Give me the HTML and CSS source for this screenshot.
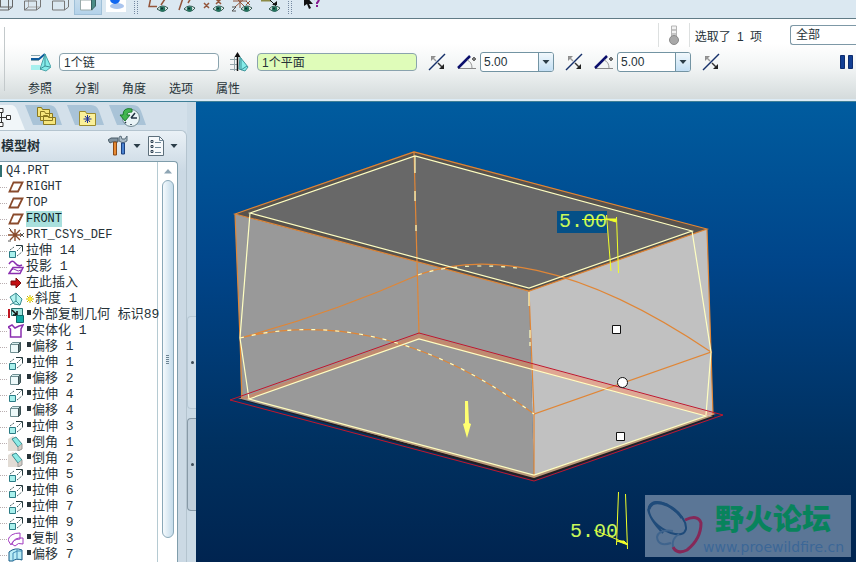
FILE: index.html
```
<!DOCTYPE html>
<html lang="zh-CN">
<head>
    <meta charset="UTF-8">
    <meta name="viewport" content="width=device-width, initial-scale=1.0">
    <title>Q4.PRT</title>
    <link rel="stylesheet" href="styles.css">
</head>
<body>
    <!-- shared icons -->
    <svg class="defs" width="0" height="0" aria-hidden="true">
        <symbol id="eye" viewBox="0 0 12 8"><path d="M0 4Q5 -1.500 11 3Q7 9 0 4Z" fill="#f4f8f8" stroke="#31564f"/><circle cx="5.500" cy="4" r="2.800" fill="#24735f"/><circle cx="5" cy="3.500" r="1" fill="#0c2c2a"/></symbol>
        <symbol id="flip" viewBox="0 0 20 20"><path d="M2 18L18 2" stroke="#16306a" stroke-width="1.500"/><path d="M4 4h5L4 9z" fill="#8d8d8d"/><path d="M5 5l4 4" stroke="#999" stroke-width="1.500"/><path d="M17 17h-5l5-5z" fill="#222"/><path d="M11 11l4 4" stroke="#333" stroke-width="1.500"/></symbol>
        <symbol id="angle" viewBox="0 0 20 20"><path d="M1 16.500H19" stroke="#888"/><path d="M1 16L13 4" stroke="#0b0f6c" stroke-width="2.500"/><path d="M10 8Q15 10 15 16" fill="none" stroke="#999"/><circle cx="17" cy="7" r="1.300" fill="#fff" stroke="#111"/></symbol>
        <symbol id="plane" viewBox="0 0 16 16"><path d="M5.500 3.500H14.500L10 12.500H1.500Z" fill="#fff" stroke="#8a4b2c" stroke-width="1.800"/></symbol>
        <symbol id="extrude" viewBox="0 0 16 16"><path d="M1.500 8.500h6v6h-6z" fill="#a8f0ec" stroke="#2a7a84"/><path d="M8 2.500h6.500v6" fill="none" stroke="#24383c"/><path d="M2 7l4-3M9 8l5-5M9 13l5-4" stroke="#4f666b" stroke-dasharray="2 1"/></symbol>
        <symbol id="offset" viewBox="0 0 16 16"><path d="M2.500 5.500h8v8h-8z" fill="#eefafa" stroke="#6f8f92"/><path d="M2.500 5.500l2-2h8l-2 2z" fill="#d7eeee" stroke="#6f8f92"/><path d="M10.500 5.500l2-2v8l-2 2z" fill="#5c7577" stroke="#3c5053"/></symbol>
        <symbol id="chamfer" viewBox="0 0 16 16"><path d="M0 4l5-3 9 8v5l-4 2H0z" fill="#e2dcd5"/><path d="M4 4l4-2 6 7-4 3z" fill="#8cebe6" stroke="#3a8b90"/><path d="M10 12v4l4-2V9" fill="#d4cdc4" stroke="#999"/></symbol>
        <symbol id="caret" viewBox="0 0 8 6"><path d="M0.500 1h7L4 5z" fill="#2b3d48"/></symbol>
    </svg>

    <div class="app">
        <header class="toolbar">
            <button class="tool" aria-label="线框"><svg viewBox="0 0 28 18"><path d="M6.500 -5v15h12v-15M6 -1h12M10.500 -6v13h12v-13M6.500 10l4-3M18.500 10l4-3" fill="none" stroke="#666"/></svg></button>
            <button class="tool" aria-label="隐藏线"><svg viewBox="0 0 28 18"><path d="M10.500 -6v13h12" fill="none" stroke="#aaa"/><path d="M6.500 10v-9h12v9zM18.500 10l4-3v-9M6.500 10l4-3" fill="none" stroke="#777"/></svg></button>
            <button class="tool" aria-label="无隐藏线"><svg viewBox="0 0 28 18"><path d="M6.500 10v-9h12v9zM18.500 10l4-3v-9" fill="none" stroke="#777"/></svg></button>
            <button class="tool active" aria-label="着色"><svg viewBox="0 0 28 18"><path d="M6.500 10v-10h12v10z" fill="#fff" stroke="#9aa"/><path d="M17.500 10v-10l4-3v9z" fill="#4b8c86" stroke="#375f60"/></svg></button>
            <button class="tool" aria-label="增强的真实感"><svg viewBox="0 0 28 18"><rect x="4" width="20" height="12" fill="#fff"/><ellipse cx="15" cy="6" rx="7" ry="3" fill="#a9c4ee"/><circle cx="13" cy="-1" r="5" fill="#1267f0"/></svg></button>
            <span class="grip"></span>
            <button class="tool" aria-label="基准平面"><svg viewBox="0 0 28 18"><path d="M7 -3L5 6.500h8M17 -1h4l-4 6" fill="none" stroke="#93553a" stroke-width="1.500"/><use href="#eye" x="13" y="5" width="12" height="8"/></svg></button>
            <button class="tool" aria-label="基准轴"><svg viewBox="0 0 28 18"><path d="M11 -2L7 10M19 -2l-3 5" fill="none" stroke="#93553a" stroke-width="1.500"/><use href="#eye" x="12" y="5" width="12" height="8"/></svg></button>
            <button class="tool" aria-label="基准点"><svg viewBox="0 0 28 18"><path d="M4 3l5 5M9 3l-5 5M16 -1l5 5M21 -1l-5 5" fill="none" stroke="#93553a" stroke-width="1.500"/><use href="#eye" x="13" y="5" width="12" height="8"/></svg></button>
            <button class="tool" aria-label="坐标系"><svg viewBox="0 0 28 18"><path d="M5 1h14M12 -3v11M7 7l10-9M7 -3l10 10M18 1l4 4M22 1l-4 4" fill="none" stroke="#93553a"/><path d="M4 7h4l-4 4h4" fill="none" stroke="#555"/><use href="#eye" x="13" y="5" width="12" height="8"/></svg></button>
            <button class="tool" aria-label="注释"><svg viewBox="0 0 28 18"><path d="M5 0.500h10" stroke="#8b8a45" stroke-width="2"/><path d="M14 0l6 6" stroke="#111"/><path d="M16 5h5V1z" fill="#111"/><use href="#eye" x="13" y="5" width="12" height="8"/></svg></button>
            <span class="grip"></span>
            <button class="tool" aria-label="帮助"><svg viewBox="0 0 28 18"><path d="M6 -6v12l3-2 2 5 2-1-2-4h4z" fill="#111"/><path d="M16 0q1-3 4-2q2 2-1 5v1M19 5v2" fill="none" stroke="#86188f" stroke-width="2"/></svg></button>
        </header>

        <section class="dashboard">
            <div class="status">
                <span class="thermo"><svg width="14" height="22" viewBox="0 0 14 22"><path d="M4.500 2h5v4h-5zM4.500 6h5v4h-5z" fill="#f2f2f2" stroke="#b5b5b5"/><path d="M4.500 10h5v4h-5z" fill="#ddd" stroke="#b5b5b5"/><circle cx="7" cy="16" r="4.500" fill="#a8a8a8" stroke="#8b8b8b"/></svg></span>
                <span class="selected-count">选取了 <span class="count">1</span> 项</span>
                <select class="filter" aria-label="过滤器"><option>全部</option></select>
            </div>
            <div class="controls">
                <label class="field">
                    <svg width="20" height="20" viewBox="0 0 20 20"><path d="M0 3.500h9M0 17.500h10M0 8.500h8" stroke="#88a4ad"/><path d="M0 7h8l6-5" fill="none" stroke="#0b5a9c" stroke-width="2"/><path d="M14 2l6 13-5 4-6-2z" fill="#84ece9" stroke="#4ba5aa"/><path d="M14 2v12l-5 3M14 14l5 1" fill="none" stroke="#3b8f96"/><path d="M0 13h9v5H0z" fill="#a7f0ee"/></svg>
                    <input type="text" value="1个链" aria-label="拔模枢轴">
                </label>
                <label class="field">
                    <svg width="20" height="20" viewBox="0 0 20 20"><path d="M1 7.500h7M1 12.500h7M1 17.500h8M5.500 5v14" stroke="#94a6ab"/><path d="M11 5l8 10-3 4-6-2z" fill="#84ece9" stroke="#3f969b"/><path d="M12 6v12l6-4" fill="none" stroke="#3b8f96"/><path d="M8.500 19V2" stroke="#111" stroke-width="1.500"/><path d="M5.500 5l3-5 3 5z" fill="#111"/></svg>
                    <input class="picked" type="text" value="1个平面" aria-label="拖拉方向">
                </label>
                <button class="flip" aria-label="反转拖拉方向"><svg width="20" height="20"><use href="#flip"/></svg></button>
                <label class="angle">
                    <svg width="20" height="20"><use href="#angle"/></svg>
                    <span class="combo"><select aria-label="角度1"><option>5.00</option></select><span class="arrow"><svg width="8" height="6"><use href="#caret"/></svg></span></span>
                </label>
                <button class="flip" aria-label="反转角度1"><svg width="20" height="20"><use href="#flip"/></svg></button>
                <label class="angle">
                    <svg width="20" height="20"><use href="#angle"/></svg>
                    <span class="combo"><select aria-label="角度2"><option>5.00</option></select><span class="arrow"><svg width="8" height="6"><use href="#caret"/></svg></span></span>
                </label>
                <button class="flip" aria-label="反转角度2"><svg width="20" height="20"><use href="#flip"/></svg></button>
                <button class="pause" aria-label="暂停"><svg width="14" height="14" viewBox="0 0 14 14"><path d="M0.500 0.500h4v13h-4zM8.500 0.500h4v13h-4z" fill="#123f94" stroke="#0d2d70"/></svg></button>
            </div>
            <nav class="panels">
                <button>参照</button>
                <button>分割</button>
                <button>角度</button>
                <button>选项</button>
                <button>属性</button>
            </nav>
        </section>

        <main class="work">
            <aside class="sidebar">
                <div class="navigator">
                    <div class="tabs">
                        <button class="tab first" aria-label="模型树"><svg width="25" height="28" viewBox="0 0 25 28"><path d="M0 3h11q4 0 6 5l8 20H0z" fill="#f1f6f9"/><path d="M0 15.500h6M1.500 9v14" stroke="#333"/><path d="M-1 6.500h4v4h-4zM6.500 13.500h4v4h-4zM-1 20.500h4v4h-4z" fill="#fff" stroke="#333"/></svg></button>
                        <button class="tab" aria-label="层"><svg width="42" height="28" viewBox="0 0 42 28"><path d="M0 3h24q6 0 8 6l5 14H8z" fill="#a9c3d7"/><path d="M12.500 5.500h4l1 2h7v7h-12zM15.500 9.500h4l1 2h7v7h-12zM18.500 13.500h4l1 2h7v7h-12z" fill="#f6e57b" stroke="#897820"/></svg></button>
                        <button class="tab" aria-label="文件夹浏览器"><svg width="42" height="28" viewBox="0 0 42 28"><path d="M0 3h24q6 0 8 6l5 14H8z" fill="#a9c3d7"/><path d="M12.500 9.500h6l1 2h9v12h-16z" fill="#faf09a" stroke="#9c8b2d"/><path d="M20.500 13v8M16.500 17h8M18 14l5 6M23 14l-5 6" stroke="#1c2f9c"/></svg></button>
                        <button class="tab" aria-label="收藏夹"><svg width="42" height="28" viewBox="0 0 42 28"><path d="M0 3h24q6 0 8 6l5 14H8z" fill="#a9c3d7"/><circle cx="22" cy="16" r="8.500" fill="#e9f3f6" stroke="#718a94"/><path d="M22 16l4-5M22 16h6M22 22v1M17 20l-1 1" stroke="#234" stroke-width="1.500"/><path d="M23 7Q14 5 14 13h-3l5 6 5-6h-3q0-3 5-3z" fill="#43b650" stroke="#1c7a2e"/></svg></button>
                    </div>
                    <div class="panel">
                        <div class="panel-head">
                            <h1>模型树</h1>
                            <button class="menu" aria-label="设置"><svg width="20" height="22" viewBox="0 0 20 22"><path d="M0 5l3-2h7v4H4l-2 1z" fill="#8193a0" stroke="#4b5d69"/><path d="M5.500 7h3v13h-3z" fill="#e78a34" stroke="#8b4a16"/><path d="M11 2v4l4 2 4-2V1l-2 3h-3l-1-3z" fill="#a8b9c5" stroke="#5b6e7b"/><path d="M13.500 8h3v11h-3z" fill="#4b83d1" stroke="#1d417f"/></svg><svg width="8" height="6"><use href="#caret"/></svg></button>
                            <button class="menu" aria-label="显示"><svg width="18" height="22" viewBox="0 0 18 22"><path d="M1.500 1.500h11l4 4v15h-15z" fill="#f7fafc" stroke="#5d6f7b"/><path d="M12.500 1.500v4h4M8 7.500h6M8 12.500h6M8 17.500h6" fill="none" stroke="#6e8798"/><path d="M4 5.500h2v2H4zM4 10.500h2v2H4zM4 15.500h2v2H4z" fill="none" stroke="#345"/></svg><svg width="8" height="6"><use href="#caret"/></svg></button>
                        </div>
                        <div class="tree-box">
                            <ul class="tree">
                                <li class="root latin">Q4.PRT</li>
                                <li class="latin"><svg><use href="#plane"/></svg><span>RIGHT</span></li>
                                <li class="latin"><svg><use href="#plane"/></svg><span>TOP</span></li>
                                <li class="latin"><svg><use href="#plane"/></svg><span class="picked">FRONT</span></li>
                                <li class="latin"><svg viewBox="0 0 16 16"><path d="M0 8h13M7 2v12M2 3l10 10M12 3L2 13" stroke="#8a4b2c" stroke-width="1.400" fill="none"/><path d="M12 6l4 4M16 6l-4 4M1 1l2 2M0 14h3" stroke="#555"/></svg><span>PRT_CSYS_DEF</span></li>
                                <li><svg><use href="#extrude"/></svg><span>拉伸 14</span></li>
                                <li><svg viewBox="0 0 16 16"><path d="M1 5q3-5 6-1t7 2M1 14.500l4-6h10l-3 6z" fill="none" stroke="#8a2fb0" stroke-width="1.500"/><path d="M3 11q3-2 5 0t5 0" fill="none" stroke="#8a2fb0"/></svg><span>投影 1</span></li>
                                <li><svg viewBox="0 0 16 16"><path d="M3 6h5V3l5 5-5 5v-3H3z" fill="#c40f13" stroke="#7d0a0c"/></svg><span>在此插入</span></li>
                                <li><svg viewBox="0 0 16 16"><path d="M2 6l6-4 6 6-2 6-6-1z" fill="#b6f5f2" stroke="#3c8c92"/><path d="M8 2v8l-6 4M8 10l4 4" fill="none" stroke="#3c8c92"/></svg><svg class="new" viewBox="0 0 8 8"><path d="M4 0v8M0 4h8M1 1l6 6M7 1L1 7" stroke="#c9b400"/><circle cx="4" cy="4" r="2" fill="#ffee30"/></svg><span>斜度 1</span></li>
                                <li class="mark"><svg viewBox="0 0 16 16"><path d="M0 2h2v9H0z" fill="#c01722"/><path d="M3.500 1.500h11v7h-11z" fill="#a3e6e2" stroke="#24716f"/><path d="M4 3l5 5M9 4v4H5" stroke="#111" fill="none" stroke-width="1.500"/><path d="M8.500 8.500h7v7h-7z" fill="#12aaa6" stroke="#0d6a69"/></svg><span>外部复制几何 标识89</span></li>
                                <li class="mark"><svg viewBox="0 0 16 16"><path d="M2.500 14V6L0 4l4-2 3 3 4-2 4-1-2 4v8z" fill="#fff" stroke="#8a2fb0" stroke-width="1.500"/></svg><span>实体化 1</span></li>
                                <li class="mark"><svg><use href="#offset"/></svg><span>偏移 1</span></li>
                                <li class="mark"><svg><use href="#extrude"/></svg><span>拉伸 1</span></li>
                                <li class="mark"><svg><use href="#offset"/></svg><span>偏移 2</span></li>
                                <li class="mark"><svg><use href="#extrude"/></svg><span>拉伸 4</span></li>
                                <li class="mark"><svg><use href="#offset"/></svg><span>偏移 4</span></li>
                                <li class="mark"><svg><use href="#extrude"/></svg><span>拉伸 3</span></li>
                                <li class="mark"><svg><use href="#chamfer"/></svg><span>倒角 1</span></li>
                                <li class="mark"><svg><use href="#chamfer"/></svg><span>倒角 2</span></li>
                                <li class="mark"><svg><use href="#extrude"/></svg><span>拉伸 5</span></li>
                                <li class="mark"><svg><use href="#extrude"/></svg><span>拉伸 6</span></li>
                                <li class="mark"><svg><use href="#extrude"/></svg><span>拉伸 7</span></li>
                                <li class="mark"><svg><use href="#extrude"/></svg><span>拉伸 9</span></li>
                                <li class="mark"><svg viewBox="0 0 16 16"><path d="M0 9q2-7 12-7v6Q5 8 3 14zM4 13q2-7 11-6v6q-5-2-8 2z" fill="#fff" stroke="#a23cc0"/></svg><span>复制 3</span></li>
                                <li class="mark"><svg viewBox="0 0 16 16"><path d="M1 5q6-5 13-2v10q-6-2-9 1H1z" fill="#b9ecf6" stroke="#155a86"/><path d="M5 14V6M9 3v9M5 6q4-3 9-2" fill="none" stroke="#3f8bb5"/></svg><span>偏移 7</span></li>
                            </ul>
                            <div class="scrollbar">
                                <svg width="10" height="6" viewBox="0 0 10 6"><path d="M1 5.500h8L5 1z" fill="#8ea5b4"/></svg>
                                <div class="thumb"><i></i></div>
                            </div>
                        </div>
                    </div>
                </div>
                <div class="sashes">
                    <button class="sash" aria-label="折叠导航器"></button>
                    <button class="sash raised" aria-label="折叠浏览器"></button>
                </div>
            </aside>

            <section class="viewport">
                <svg class="model" viewBox="196 102 660 460" preserveAspectRatio="xMidYMid meet">
                    <!-- solid -->
                    <path d="M241 400L534 480L714 417V414L534 474L241 396Z" fill="#241d20"/>
                    <path d="M235 214L529 291L534 477L241 399L240 338Z" fill="#999"/>
                    <path d="M529 291L707 229L711 352L713 415L534 477Z" fill="#c1c1c1"/>
                    <path d="M235 214L414 151L707 229L529 291Z" fill="#57524d"/>
                    <path d="M250 213L415 156L692 231L529 288Z" fill="#686868"/>
                    <!-- draft plane -->
                    <path d="M238 399L419 334L532 364V370L419 339L249 399Z" fill="#c08a70"/>
                    <path d="M532 364L716 414L706 416L532 370Z" fill="#dfa793"/>
                    <path d="M242 398L249 399L534 475L706 416H713L534 478Z" fill="#b89a7c"/>
                    <!-- model edges -->
                    <g fill="none" stroke="#e08636" stroke-width="1.200">
                        <path d="M235 214L414 152L707 229L529 291ZM529 291L534 414V477M707 229L711 352L713 415M235 214L240 338L242 398M414 152L419 334"/>
                        <path d="M240 338Q330 314 418 275C480 252 575 260 711 352L534 414C420 330 320 318 240 338"/>
                    </g>
                    <g fill="none" stroke="#ffffc2" stroke-width="1.200">
                        <path d="M250 213L415 156L692 231L529 288ZM250 213L240 338L249 399M692 231L711 352L706 415M249 399L419 339L706 416L534 475Z"/>
                        <path d="M415 156v17M415 191v10M416 225v6M529 292v14M530 330v8M530 342v4"/>
                        <path d="M240 338C320 318 420 330 534 414M418 275C450 264 490 265 517 268" stroke-dasharray="4 8"/>
                    </g>
                    <path d="M230 400L419 333L723 415L534 481Z" fill="none" stroke="#c3162b"/>
                    <path d="M465 401h3l1 22 2 1-4 14-4-14 2-1z" fill="#ffff70"/>
                    <!-- handles -->
                    <g fill="#fff" stroke="#111">
                        <path d="M612.500 325.500h8v8h-8zM616.500 432.500h8v8h-8z"/>
                        <circle cx="622.500" cy="382.500" r="5"/>
                    </g>
                    <!-- angle dimensions -->
                    <path d="M557 211h50v22h-50z" fill="#045087"/>
                    <text class="dimension" x="559" y="227">5.00</text>
                    <text class="dimension" x="570" y="537">5.00</text>
                    <g fill="none" stroke="#f1ff28">
                        <path d="M582 219.500h34M606.500 215L611 271M616.500 217L618.500 273M618.500 492L616.500 545M625.500 494L627.500 549M594 530L628 544"/>
                        <path d="M606 219l10 3v-3zM617 541l11 4-4-4z" fill="#f1ff28"/>
                    </g>
                </svg>
                <div class="watermark">
                    <svg width="58" height="58" viewBox="0 0 58 58"><g fill="none"><path d="M18 36Q2 20 4 10Q8 1 22 8Q42 20 41 32Q39 40 26 36Q6 28 3 12" stroke="#1f4b7a" stroke-width="2"/><path d="M4 12Q7 2 22 8Q32 13 37 21" stroke="#1f4b7a" stroke-width="3"/><path d="M40 23Q53 17 56 26Q56 42 42 53Q32 58 28 50" stroke="#852858" stroke-width="3"/><path d="M28 34Q14 32 12 40Q13 50 26 46M28 50Q26 42 34 37" stroke="#3f648d" stroke-width="2"/></g></svg>
                    <div class="mark-text">
                        <strong>野火论坛</strong>
                        <span>www.proewildfire.cn</span>
                    </div>
                </div>
            </section>
        </main>
    </div>
</body>
</html>
```
FILE: styles.css
```
* {
    margin: 0;
    padding: 0;
    box-sizing: border-box;
}

body {
    font-family: "Liberation Sans", "Noto Sans CJK SC", sans-serif;
    font-size: 12px;
    color: #263238;
    background: #dbe8f1;
}

button {
    font: inherit;
    color: inherit;
    background: none;
    border: none;
    cursor: pointer;
}

input,
select {
    font: inherit;
    color: inherit;
}

svg {
    display: block;
    flex-shrink: 0;
}

.defs {
    position: absolute;
}

.app {
    display: flex;
    flex-direction: column;
    height: 100vh;
    overflow: hidden;
}

/* top toolbar */
.toolbar {
    display: flex;
    flex-shrink: 0;
    height: 19px;
    padding-right: 10px;
    border-bottom: 1px solid #617b86;
    background: #dbe8f1;
    overflow: hidden;
}

.tool {
    width: 28px;
    height: 18px;
    flex-shrink: 0;
}

.tool:first-child {
    margin-left: -10px;
}

.tool.active {
    height: 15px;
    background: linear-gradient(#c6dcec, #b3d2ea);
    border: 1px solid #9fc0d8;
    border-top: none;
    overflow: hidden;
}

.tool svg {
    width: 28px;
    height: 18px;
}

.tool.active svg {
    margin-left: -1px;
}

.grip {
    width: 4px;
    height: 15px;
    margin: 0 6px 0 4px;
    background: repeating-linear-gradient(#dbe8f1 0 1px, transparent 1px 2px), linear-gradient(90deg, #7488a0 1px, transparent 1px 3px, #7488a0 3px);
}

/* dashboard */
.dashboard {
    flex-shrink: 0;
    padding-top: 3px;
    border-bottom: 1px solid #3f7f97;
    box-shadow: inset 0 -2px #dcebf5;
    background: linear-gradient(#fff 30%, #f1f4f4 60%, #d2d9da);
    position: relative;
}

.dashboard::before {
    content: "";
    position: absolute;
    left: 4px;
    top: 8px;
    bottom: 10px;
    border-left: 1px solid #c3c9cb;
}

.status {
    display: flex;
    justify-content: flex-end;
    align-items: center;
    height: 26px;
}

.thermo {
    padding: 1px 8px;
    margin-right: 5px;
    border-left: 1px solid #dde0e0;
    border-right: 1px solid #dde0e0;
}

.count {
    padding: 0 3px;
}

.filter {
    appearance: none;
    width: 66px;
    height: 20px;
    margin-left: 28px;
    padding: 0 5px;
    border: 1px solid #7d98a6;
    border-right: none;
    border-radius: 3px 0 0 3px;
    background: #fff;
}

.controls {
    display: flex;
    align-items: center;
    gap: 10px;
    height: 28px;
    padding: 0 2px 0 31px;
}

.field {
    display: flex;
    align-items: center;
    gap: 8px;
}

.field input {
    width: 160px;
    height: 18px;
    padding: 0 4px 2px;
    border: 1px solid #8aa3ae;
    border-radius: 4px;
    background: #fff;
}

.field .picked {
    background: #dffcb9;
}

.angle {
    display: flex;
    align-items: center;
    gap: 3px;
}

.combo {
    display: flex;
    width: 74px;
    height: 20px;
    border: 1px solid #7394a3;
    border-radius: 3px;
    background: #fff;
    overflow: hidden;
}

.combo select {
    appearance: none;
    flex: 1;
    min-width: 0;
    padding: 0 3px;
    border: none;
    background: none;
}

.arrow {
    display: flex;
    align-items: center;
    justify-content: center;
    width: 15px;
    border-left: 1px solid #7394a3;
    background: linear-gradient(#f1f8fc, #c3dff4);
}

.pause {
    margin-left: auto;
}

.panels {
    display: flex;
    gap: 23px;
    height: 25px;
    padding: 0 28px 2px;
}

/* navigator */
.work {
    display: flex;
    flex: 1;
    min-height: 0;
}

.sidebar {
    display: flex;
    flex: 0 0 196px;
    min-width: 0;
    background: #d3e0ea;
}

.navigator {
    display: flex;
    flex-direction: column;
    flex: 1;
    min-width: 0;
}

.tabs {
    display: flex;
    height: 28px;
}

.panel {
    display: flex;
    flex-direction: column;
    flex: 1;
    min-height: 0;
    padding-right: 8px;
    border-top: 1px solid #b4c4cf;
    border-right: 1px solid #b4c4cf;
    border-radius: 0 6px 0 0;
    background: linear-gradient(#eaf1f6, #cbd9e4 40px);
}

.panel-head {
    display: flex;
    align-items: center;
    gap: 6px;
    height: 30px;
    padding-left: 1px;
}

.panel-head h1 {
    margin-right: auto;
    font-size: 13px;
    line-height: 16px;
}

.menu {
    display: flex;
    align-items: center;
    gap: 5px;
}

.tree-box {
    display: flex;
    flex: 1;
    min-height: 0;
    border-top: 1px solid #7f9dab;
    border-right: 1px solid #7f9dab;
    border-radius: 0 4px 0 0;
    background: #fff;
    overflow: hidden;
}

.tree {
    flex: 1;
    min-width: 0;
    padding-top: 1px;
    border-right: 1px solid #b5cad2;
    list-style: none;
    font-family: "Liberation Mono", "Noto Sans CJK SC", monospace;
    font-size: 13px;
}

.tree li {
    display: flex;
    align-items: center;
    height: 16px;
    line-height: 16px;
    white-space: nowrap;
}

.tree .latin {
    font-size: 12px;
}

.tree li::before {
    content: "";
    flex-shrink: 0;
    width: 7px;
    margin-right: 1px;
    border-top: 1px dotted #b9aeb0;
}

.tree .root::before {
    width: 2px;
    height: 12px;
    margin-right: 4px;
    border: none;
    background: #2f6f70;
}

.tree svg {
    width: 16px;
    height: 16px;
    margin-right: 2px;
}

.tree .new {
    width: 8px;
    height: 8px;
    margin: 0 1px 0 0;
}

.tree .mark span::before {
    content: "";
    display: inline-block;
    width: 4px;
    height: 5px;
    margin: 0 1px 4px 1px;
    vertical-align: middle;
    background: #263238;
}

.tree .picked {
    background: #a9e0dd;
    color: #10242a;
}

.scrollbar {
    display: flex;
    flex-direction: column;
    align-items: center;
    flex-shrink: 0;
    gap: 6px;
    width: 19px;
    padding: 6px 0 24px;
}

.thumb {
    display: flex;
    align-items: center;
    justify-content: center;
    flex: 1;
    width: 12px;
    border: 1px solid #8aa8b8;
    border-radius: 6px;
    background: linear-gradient(90deg, #f5fafd, #c4dbea);
}

.thumb i {
    width: 3px;
    height: 9px;
    background: repeating-linear-gradient(#6c8494 0 1px, transparent 1px 2px);
}

.sashes {
    display: flex;
    flex-direction: column;
    justify-content: flex-end;
    flex-shrink: 0;
    gap: 9px;
    width: 9px;
    padding-bottom: 51px;
    background: #cbdae5;
}

.sash {
    display: flex;
    align-items: center;
    justify-content: center;
    height: 93px;
    border: 1px solid #b7c8d4;
    border-right: none;
    border-radius: 4px 0 0 4px;
    background: #cfdde8;
}

.sash::before {
    content: "";
    width: 3px;
    height: 3px;
    border-radius: 2px;
    background: #3d4c57;
}

.sash.raised {
    border-color: #8799a6;
    background: #c0cfdb;
}

/* graphics window */
.viewport {
    flex: 1;
    min-width: 0;
    position: relative;
    background: linear-gradient(#005c9f, #00458a 35%, #00305f 75%, #002450);
}

.model {
    width: 100%;
    height: 100%;
}

.dimension {
    font-family: "Liberation Mono", monospace;
    font-size: 20px;
    fill: #c9f95a;
}

.watermark {
    position: absolute;
    right: 5px;
    bottom: 5px;
    display: flex;
    align-items: center;
    width: 206px;
    height: 62px;
    background: #5b7696;
}

.mark-text {
    display: flex;
    flex-direction: column;
}

.mark-text strong {
    padding-left: 12px;
    font-family: "Noto Sans CJK SC", sans-serif;
    font-size: 29px;
    font-weight: 900;
    line-height: 42px;
    color: #08835c;
}

.mark-text span {
    font-family: "DejaVu Sans", sans-serif;
    font-size: 14px;
    line-height: 18px;
    color: #3c6797;
}
```
